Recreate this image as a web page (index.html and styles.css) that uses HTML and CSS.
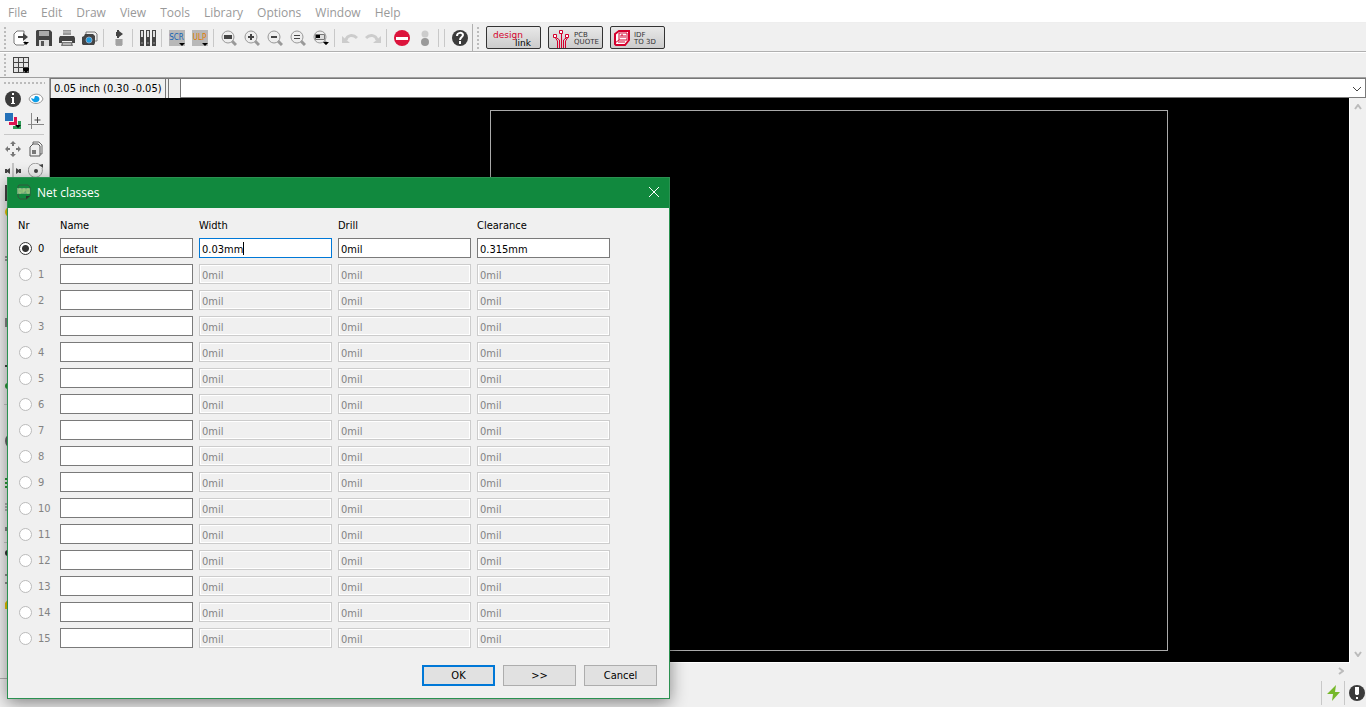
FILE: index.html
```html
<!DOCTYPE html>
<html lang="en">
    <head>
        <meta charset="utf-8">
        <title>Board - Net classes</title>
        <link rel="stylesheet" href="styles.css">
    </head>
    <body>
        <nav class="menubar">
            <a href="#">File</a>
            <a href="#">Edit</a>
            <a href="#">Draw</a>
            <a href="#">View</a>
            <a href="#">Tools</a>
            <a href="#">Library</a>
            <a href="#">Options</a>
            <a href="#">Window</a>
            <a href="#">Help</a>
        </nav>

        <div class="toolbar">
            <span class="grip"></span>
            <button class="tool" aria-label="Open"><svg viewBox="0 0 16 16"><path d="M11 4V1H4L1 4v9l2 2h8l1-1v-3" fill="#fff" stroke="#777"/><path d="M5 6h5V3l5 4-5 4V8H5z" fill="#444"/><path d="M10 12h6l-3 3z"/></svg></button>
            <button class="tool" aria-label="Save"><svg viewBox="0 0 16 16"><path d="M1 0h13l2 2v14H0V1z" fill="#444"/><path d="M3 1h10v5H3z" fill="#aaa"/><path d="M3 10h10v6H3z" fill="#ddd"/><path d="M5 11h3v5H5z" fill="#555"/></svg></button>
            <button class="tool" aria-label="Print"><svg viewBox="0 0 16 16"><path d="M4 0h8v5H4z" fill="#999"/><path d="M4 2h8" stroke="#ccc"/><path d="M1 6h14l1 2v5h-3v-2H3v2H0V8z" fill="#444"/><path d="M3 12h10l1 4H2z" fill="#777"/><path d="M4 14h8" stroke="#eee"/></svg></button>
            <button class="tool" aria-label="Image"><svg viewBox="0 0 16 16"><path d="M4 4V2h9l2 2v7h-2" fill="none" stroke="#777"/><path d="M3 4h8l2 2v7l-1 2H1l-1-1V7l2-1z" fill="#444"/><circle cx="7" cy="10" r="3" fill="#1e9de0" stroke="#8ac"/></svg></button>
            <span class="sep"></span>
            <button class="tool" aria-label="Schematic"><svg viewBox="0 0 16 16"><path d="M6 0h2v1l4 3-4 3v1H6V6H5V2h1z" fill="#444"/><path d="M5 9h6v7H5z" fill="#aaa"/><path d="M4 10h8M4 12h8M4 14h8" stroke="#999"/></svg></button>
            <span class="sep"></span>
            <button class="tool" aria-label="Use library"><svg viewBox="0 0 16 16"><path d="M0 0h4v16H0zM6 0h4v16H6zM12 0h4v16h-4z" fill="#444"/><path d="M1 1h2v6H1zM7 1h2v6H7zM13 1h2v6h-2z" fill="#ddd"/><path d="M1 13h2M7 13h2M13 13h2" stroke="#999"/></svg></button>
            <span class="sep"></span>
            <button class="tool"><span class="chip scr">SCR</span></button>
            <button class="tool"><span class="chip ulp">ULP</span></button>
            <span class="sep"></span>
            <button class="tool" aria-label="Fit"><svg viewBox="0 0 16 16"><path d="m10 10 5 5" stroke="#999" stroke-width="3"/><circle cx="7" cy="7" r="6" fill="#eee" stroke="#999"/><path d="M3 5h8v4H3z" fill="#444"/></svg></button>
            <button class="tool" aria-label="Zoom in"><svg viewBox="0 0 16 16"><path d="m10 10 5 5" stroke="#999" stroke-width="3"/><circle cx="7" cy="7" r="6" fill="#eee" stroke="#999"/><path d="M4 7h6M7 4v6" stroke="#444" stroke-width="2"/></svg></button>
            <button class="tool" aria-label="Zoom out"><svg viewBox="0 0 16 16"><path d="m10 10 5 5" stroke="#999" stroke-width="3"/><circle cx="7" cy="7" r="6" fill="#eee" stroke="#999"/><path d="M4 7h6" stroke="#444" stroke-width="2"/></svg></button>
            <button class="tool" aria-label="Redraw"><svg viewBox="0 0 16 16"><path d="m10 10 5 5" stroke="#999" stroke-width="3"/><circle cx="7" cy="7" r="6" fill="#eee" stroke="#999"/><path d="M4 5.500h6M4 8.500h6" stroke="#444"/></svg></button>
            <button class="tool" aria-label="Select zoom"><svg viewBox="0 0 16 16"><path d="m10 10 4 4" stroke="#999" stroke-width="3"/><circle cx="7" cy="7" r="6" fill="#eee" stroke="#999"/><path d="M2.500 4.500h9v5h-9z" fill="#ddd" stroke="#777"/><path d="M3 5h4v3H3zM10 12h6l-3 3z"/></svg></button>
            <span class="sep"></span>
            <button class="tool" aria-label="Undo"><svg viewBox="0 0 16 16"><path d="M4 10c1-5 7-6 11-2" fill="none" stroke="#ccc" stroke-width="3"/><path d="M0 6v7h8z" fill="#ccc"/></svg></button>
            <button class="tool" aria-label="Redo"><svg viewBox="0 0 16 16"><path d="M12 10C11 5 5 4 1 8" fill="none" stroke="#ccc" stroke-width="3"/><path d="M16 6v7H8z" fill="#ccc"/></svg></button>
            <span class="sep"></span>
            <button class="tool" aria-label="Cancel command"><svg viewBox="0 0 16 16"><circle cx="8" cy="8" r="8" fill="#dc143c"/><path d="M2 7h12v3H2z" fill="#fff"/></svg></button>
            <button class="tool" aria-label="Go"><svg viewBox="0 0 16 16"><circle cx="8" cy="4" r="3.500" fill="#ccc"/><circle cx="8" cy="12" r="4" fill="#999"/></svg></button>
            <span class="sep"></span>
            <span class="sep"></span>
            <button class="tool" aria-label="Help topics"><svg viewBox="0 0 16 16"><circle cx="8" cy="8" r="8" fill="#3c3c3c"/><path d="M5 6c0-4 6-4 6-1 0 2-3 2-3 5M8 11v3" fill="none" stroke="#fff" stroke-width="2"/></svg></button>
            <span class="edge"></span>
            <span class="grip"></span>
            <div class="brands">
                <button class="brand design"><span>design</span><b>link</b></button>
                <button class="brand">
                    <svg viewBox="0 0 18 20"><path d="M9.500 4v16M7.500 20V12l-4-3M11.500 20V12l4-3M5.500 20v-7l-2-3M13.500 20v-7l2-3" fill="none" stroke="#d4002d"/><path d="M7.500 2.500h3v3h-3zM1.500 6.500h3v3h-3zM13.500 6.500h3v3h-3z" fill="#fff" stroke="#d4002d"/></svg>
                    <span>PCB<br>QUOTE</span>
                </button>
                <button class="brand idf">
                    <svg viewBox="0 0 16 16"><path d="M1 4l4-3h10v9l-4 5H2l-1-1z" fill="#fff" stroke="#d4002d" stroke-width="2"/><path d="M5 3h8v7H5zM1 13l4-3M7 8V5h2v3M11 5v3M4 12h7" fill="none" stroke="#d4002d"/></svg>
                    <span>IDF<br>TO 3D</span>
                </button>
            </div>
        </div>

        <div class="toolbar second">
            <span class="grip"></span>
            <button class="tool" aria-label="Grid"><svg viewBox="0 0 16 16"><path d="M0 0h16v16H0z" fill="#444"/><path d="M1 1h4v4H1zM6 1h4v4H6zM11 1h4v4h-4zM1 6h4v4H1zM6 6h4v4H6zM11 6h4v4h-4zM1 11h4v4H1zM6 11h4v4H6zM11 11h4v4h-4z" fill="#e4e4e4"/><path d="M10 11h6v2l-3 3-3-3z"/></svg></button>
        </div>

        <main class="workspace">
            <aside class="palette">
                <span class="grip-h"></span>
                <div class="tools">
                    <button class="tool" aria-label="Info"><svg viewBox="0 0 16 16"><circle cx="8" cy="8" r="8" fill="#3c3c3c"/><path d="M7 2h2v2H7zM6 6h3v6h1v1H6v-1h1V7H6z" fill="#fff"/></svg></button>
                    <button class="tool" aria-label="Show"><svg viewBox="0 0 16 16"><path d="M1 8c2-6 12-7 14 0-2 6-12 6-14 0z" fill="#fff" stroke="#999"/><path d="M3 7l3 1 1-3c5-1 6 5 2 6-3 1-5-1-6-4z" fill="#0d9ee8"/></svg></button>
                    <button class="tool" aria-label="Layers"><svg viewBox="0 0 16 16"><path d="M0 0h8v8H0z" fill="#2471b9"/><path d="M9 4h3v8H4V9h5z" fill="#dc1450"/><path d="M13 8h3v8H8v-3h5z" fill="#2e9b57"/><path d="M10 12h6l-3 3z"/></svg></button>
                    <button class="tool" aria-label="Mark"><svg viewBox="0 0 16 16"><path d="M3.500 0v16M0 11.500h16" stroke="#888"/><path d="M9.500 4v6M6.500 7h6" stroke="#444"/></svg></button>
                    <span class="line"></span>
                    <button class="tool" aria-label="Move"><svg viewBox="0 0 16 16"><path d="M8 0l3 3H9v2H7V3H5zM8 16l3-3H9v-2H7v2H5zM0 8l3-3v2h2v2H3v2zM16 8l-3-3v2h-2v2h2v2z" fill="#777"/></svg></button>
                    <button class="tool" aria-label="Copy"><svg viewBox="0 0 16 16"><path d="M5 3V1h6l3 3v9h-2" fill="none" stroke="#666"/><path d="M5 3h5l2 2v10H2V6z" fill="#eee" stroke="#555"/><path d="M4 9h4v4H4z" fill="#777"/></svg></button>
                    <button class="tool" aria-label="Mirror"><svg viewBox="0 0 16 16"><path d="M8 0v16" stroke="#999"/><path d="M0 6h2v1l3-2v6L2 9v1H0zM16 6h-2v1l-3-2v6l3-2v1h2z" fill="#444"/></svg></button>
                    <button class="tool" aria-label="Rotate"><svg viewBox="0 0 16 16"><path d="M12 2a7 7 0 1 0 2 3" fill="none" stroke="#999"/><circle cx="8" cy="8" r="2" fill="#444"/><path d="M11 2l4-1v4z" fill="#444"/></svg></button>
                </div>
                <div class="tools narrow">
                    <button class="tool" aria-label="Group"><svg viewBox="0 0 16 16"><path d="M1 1h14v14H1z" fill="none" stroke="#444" stroke-width="2"/></svg></button>
                    <button class="tool" aria-label="Change"><svg viewBox="0 0 16 16"><circle cx="5" cy="5" r="5" fill="#e8c800"/></svg></button>
                    <button class="tool" aria-label="Delete"></button>
                    <button class="tool" aria-label="Pinswap"><svg viewBox="0 0 16 16"><path d="M0 6h16M0 9h16" stroke="#444"/></svg></button>
                    <button class="tool" aria-label="Lock"></button>
                    <button class="tool" aria-label="Name"></button>
                    <button class="tool" aria-label="Value"><svg viewBox="0 0 16 16"><path d="M0 1h14v9H0z" fill="#888"/></svg></button>
                    <button class="tool" aria-label="Smash"></button>
                    <button class="tool" aria-label="Miter"><svg viewBox="0 0 16 16"><path d="M0 5h3v8" fill="none" stroke="#444" stroke-width="2"/></svg></button>
                    <button class="tool" aria-label="Split"><svg viewBox="0 0 16 16"><circle cx="3" cy="3" r="3" fill="#2e9b3a"/></svg></button>
                    <span class="line"></span>
                    <button class="tool" aria-label="Route"></button>
                    <button class="tool" aria-label="Ripup"><svg viewBox="0 0 16 16"><circle cx="8" cy="8" r="7" fill="none" stroke="#666" stroke-width="2"/></svg></button>
                    <button class="tool" aria-label="Wire"></button>
                    <button class="tool" aria-label="Via"><svg viewBox="0 0 16 16"><path d="M0 2h6M0 6h6M0 10h6" stroke="#2e9b3a" stroke-width="2"/></svg></button>
                    <button class="tool" aria-label="Signal"><svg viewBox="0 0 16 16"><path d="M0 5h6M0 8h6M0 11h6" stroke="#777"/></svg></button>
                    <button class="tool" aria-label="Hole"><svg viewBox="0 0 16 16"><path d="M0 6h10v4H0z" fill="#888"/></svg></button>
                    <span class="line"></span>
                    <button class="tool" aria-label="Ratsnest"><svg viewBox="0 0 16 16"><circle cx="3" cy="4" r="3" fill="#333"/></svg></button>
                    <button class="tool" aria-label="Autorouter"><svg viewBox="0 0 16 16"><path d="M0 4h4v8H0" fill="none" stroke="#333"/></svg></button>
                    <button class="tool" aria-label="Errors"><svg viewBox="0 0 16 16"><path d="M8 0l8 16H0V10z" fill="#e8c800"/></svg></button>
                </div>
            </aside>

            <section class="editor">
                <div class="command">
                    <output class="coords">0.05 inch (0.30 -0.05)</output>
                    <span class="spacer"></span>
                    <div class="combo">
                        <select aria-label="Command line"><option></option></select>
                        <svg viewBox="0 0 10 6"><path d="m1 1 4 4 4-4" fill="none" stroke="#444"/></svg>
                    </div>
                </div>
                <div class="view">
                    <div class="canvas"><div class="board"></div></div>
                    <div class="vscroll">
                        <svg viewBox="0 0 8 6"><path d="m1 5 3-4 3 4" fill="none" stroke="#bbb" stroke-width="2"/></svg>
                        <svg viewBox="0 0 8 6"><path d="m1 1 3 4 3-4" fill="none" stroke="#bbb" stroke-width="2"/></svg>
                    </div>
                </div>
                <div class="hscroll">
                    <svg viewBox="0 0 6 8"><path d="m1 1 4 3-4 3" fill="none" stroke="#bbb" stroke-width="2"/></svg>
                </div>
            </section>
        </main>

        <footer class="status">
            <span class="bolt"><svg viewBox="0 0 14 16"><path d="M9 0 0 9h6l-1 7 8-9H8z" fill="#76b82a"/></svg></span>
            <svg class="alert" viewBox="0 0 16 16"><circle cx="8" cy="8" r="8" fill="#3c3c3c"/><path d="M6 2h4v7L9 10H7L6 9zM7 12h2v2H7z" fill="#fff"/></svg>
        </footer>

        <form class="dialog" role="dialog" aria-labelledby="dialogTitle">
            <header class="titlebar">
                <svg class="brd" viewBox="0 0 14 16"><path d="M2 1h9l2 2v9l-3 3H3l-2-2V2z" fill="none" stroke="#34573c"/><path d="M0 4h13v6H0z" fill="#6da878"/><path d="M2 5v4h2V5zM6 9V5h2v2H6M10 5v4h2V5z" fill="none" stroke="#a5d07f"/><path d="M9 12h4l-4 3z" fill="#26372a"/></svg>
                <span id="dialogTitle">Net classes</span>
                <button type="button" class="close" aria-label="Close"><svg viewBox="0 0 12 12"><path d="m1 1 10 10M11 1 1 11" stroke="#fff"/></svg></button>
            </header>
            <table>
                <thead>
                    <tr>
                        <th class="nr">Nr</th>
                        <th>Name</th>
                        <th>Width</th>
                        <th>Drill</th>
                        <th>Clearance</th>
                    </tr>
                </thead>
                <tbody id="classes">
                    <tr>
                        <td><label><input type="radio" name="nr" checked>0</label></td>
                        <td><input type="text" aria-label="Name 0" value="default"></td>
                        <td><div class="active"><input type="text" id="width0" aria-label="Width 0" value="0.03mm" size="5"><i class="caret"></i></div></td>
                        <td><input type="text" aria-label="Drill 0" value="0mil"></td>
                        <td><input type="text" aria-label="Clearance 0" value="0.315mm"></td>
                    </tr>
                </tbody>
            </table>
            <div class="actions">
                <button type="button" class="ok">OK</button>
                <button type="button">&gt;&gt;</button>
                <button type="button">Cancel</button>
            </div>
        </form>
        <script src="script.js"></script>
    </body>
</html>
```
FILE: styles.css
```css
* {
    box-sizing: border-box;
}
body {
    margin: 0;
    height: 100vh;
    overflow: hidden;
    display: flex;
    flex-direction: column;
    background: #f0f0f0;
    color: #000;
    font-family: "DejaVu Sans Condensed", "DejaVu Sans", sans-serif;
    font-size: 11px;
}
button, input, select {
    font: inherit;
    color: inherit;
}
svg {
    display: block;
}
.menubar {
    display: flex;
    gap: 14px;
    height: 23px;
    padding: 4px 8px 0;
    background: #fff;
    border-bottom: 1px solid #eee;
    font: 12px/18px "Open Sans", "Noto Sans", sans-serif;
}
.menubar a {
    color: #999;
    text-decoration: none;
}
.toolbar {
    display: flex;
    align-items: center;
    height: 30px;
    border-bottom: 1px solid #fff;
    box-shadow: inset 0 -1px #b0b0b0;
}
.second {
    height: 25px;
    border-bottom: 1px solid #a0a0a0;
    box-shadow: none;
}
.tool {
    display: flex;
    justify-content: center;
    align-items: center;
    width: 23px;
    height: 22px;
    padding: 0;
    border: 0;
    background: none;
}
.tool svg {
    width: 16px;
    height: 16px;
}
.grip {
    width: 2px;
    height: 22px;
    margin: 0 3px 0 4px;
    background: repeating-linear-gradient(#bbb 0 2px, transparent 2px 4px);
}
.sep {
    width: 1px;
    height: 18px;
    margin: 0 3px 0 2px;
    background: #c8c8c8;
}
.edge {
    width: 1px;
    height: 28px;
    margin-left: 1px;
    background: #b0b0b0;
}
.chip {
    position: relative;
    width: 16px;
    height: 16px;
    background: #b8b8b8;
    font-size: 8px;
    line-height: 15px;
}
.chip::after {
    content: "";
    position: absolute;
    right: 0;
    bottom: 0;
    border: 3px solid transparent;
    border-top-color: #000;
    border-bottom: 0;
}
.scr {
    color: #1463b4;
}
.ulp {
    color: #e07b00;
}
.brands {
    display: flex;
    gap: 7px;
    margin-left: 4px;
}
.brand {
    display: flex;
    align-items: center;
    gap: 4px;
    width: 55px;
    height: 23px;
    padding: 0 0 0 3px;
    border: 1px solid #333;
    border-radius: 2px;
    background: linear-gradient(#e8e8e8, #ccc);
    color: #333;
    font: 7px/7px "DejaVu Sans", sans-serif;
    text-align: left;
    white-space: nowrap;
}
.brand span {
    padding-top: 3px;
}
.brand svg {
    width: 18px;
    height: 20px;
}
.idf svg {
    width: 16px;
    height: 16px;
}
.design {
    flex-direction: column;
    align-items: stretch;
    justify-content: center;
    gap: 0;
    padding: 0 9px 0 6px;
    font-size: 9px;
    line-height: 8px;
    color: #d4002d;
}
.design b {
    color: #000;
    font-weight: normal;
    text-align: right;
}
.workspace {
    flex: 1;
    display: flex;
    min-height: 0;
}
.palette {
    width: 50px;
    padding: 4px 1px 0;
    overflow: hidden;
    border-right: 1px solid #a0a0a0;
    border-bottom: 1px solid #b0b0b0;
}
.grip-h {
    display: block;
    height: 2px;
    margin: 0 3px 4px;
    background: repeating-linear-gradient(90deg, #bbb 0 2px, transparent 2px 4px);
}
.tools {
    display: grid;
    grid-template-columns: 23px 23px;
}
.narrow {
    grid-template-columns: 23px;
}
.line {
    grid-column: 1 / -1;
    height: 1px;
    margin: 2px 3px 3px;
    background: #c8c8c8;
}
.editor {
    flex: 1;
    min-width: 0;
    display: flex;
    flex-direction: column;
}
.command {
    display: flex;
    height: 20px;
    background: #f0f0f0;
    border-top: 1px solid #777;
}
.coords {
    padding: 0 3px;
    border: 1px solid #777;
    border-width: 0 1px 0 1px;
    line-height: 20px;
    white-space: nowrap;
}
.spacer {
    width: 13px;
    margin-left: 2px;
    border: 1px solid #777;
    border-top: 0;
    border-bottom: 0;
}
.combo {
    flex: 1;
    position: relative;
}
.combo select {
    display: block;
    appearance: none;
    width: 100%;
    height: 19px;
    border: 1px solid #7a7a7a;
    border-top: 0;
    border-left: 0;
    border-radius: 0;
    background: #fff;
}
.combo svg {
    position: absolute;
    right: 4px;
    top: 7px;
    width: 10px;
    height: 6px;
}
.view {
    flex: 1;
    display: flex;
}
.canvas {
    flex: 1;
    display: flex;
    padding: 12px 181px 11px 440px;
    background: #000;
    border-bottom: 1px solid #fff;
}
.board {
    flex: 1;
    border: 1px solid #aaa;
}
.vscroll {
    display: flex;
    flex-direction: column;
    justify-content: space-between;
    align-items: center;
    width: 17px;
    padding: 6px 0;
    border-left: 1px solid #fff;
}
.vscroll svg {
    width: 8px;
    height: 6px;
}
.hscroll {
    display: flex;
    justify-content: flex-end;
    align-items: center;
    height: 16px;
    padding-right: 22px;
}
.hscroll svg {
    width: 6px;
    height: 8px;
}
.status {
    display: flex;
    justify-content: flex-end;
    align-items: center;
    gap: 4px;
    height: 28px;
    padding-right: 1px;
}
.bolt {
    display: flex;
    align-items: center;
    height: 24px;
    padding: 0 3px 0 5px;
    border: 1px solid #c8c8c8;
    border-width: 0 1px;
}
.bolt svg {
    width: 14px;
    height: 16px;
}
.alert {
    width: 16px;
    height: 16px;
}

/* dialog */
.dialog {
    position: absolute;
    left: 7px;
    top: 177px;
    width: 663px;
    background: #f0f0f0;
    border: 1px solid #2b9151;
    box-shadow: 0 4px 16px rgba(0, 0, 0, 0.45);
}
.titlebar {
    display: flex;
    align-items: center;
    gap: 6px;
    height: 30px;
    padding: 0 9px 2px;
    background: #11893e;
    color: #fff;
    font: 12px "Open Sans", "Noto Sans", sans-serif;
}
.brd {
    width: 14px;
    height: 16px;
}
.close {
    margin-left: auto;
    padding: 0;
    border: 0;
    background: none;
}
.close svg {
    width: 12px;
    height: 12px;
}
.dialog table {
    margin: 4px;
    border-spacing: 6px;
}
.dialog th {
    width: 133px;
    height: 14px;
    padding: 2px 0 0;
    font-weight: normal;
    line-height: 12px;
    text-align: left;
}
.dialog .nr {
    width: 36px;
}
.dialog td {
    padding: 0;
    height: 20px;
}
.dialog label {
    display: flex;
    align-items: center;
    gap: 6px;
    height: 19px;
}
.dialog [type="radio"] {
    appearance: none;
    width: 13px;
    height: 13px;
    margin: 0 0 0 1px;
    border: 1px solid #333;
    border-radius: 50%;
    background: #fff;
}
.dialog [type="radio"]:checked {
    background: radial-gradient(#333 0 3px, #fff 4px);
}
.dialog [type="radio"]:disabled {
    border-color: #bbb;
}
.dialog [type="text"] {
    display: block;
    width: 100%;
    height: 20px;
    padding: 2px 2px 0;
    border: 1px solid #7a7a7a;
    border-radius: 0;
    background: #fff;
    outline: none;
}
.dialog [type="text"]:disabled {
    background: #f0f0f0;
    border-color: #ccc;
    box-shadow: inset 0 0 0 1px #fff;
}
.off label, .off :disabled {
    color: #838383;
}
.dialog .active {
    display: flex;
    align-items: center;
    height: 20px;
    border: 1px solid #0078d7;
    background: #fff;
}
.dialog .active [type="text"] {
    width: auto;
    height: 18px;
    padding: 2px 0 0 2px;
    border: 0;
    field-sizing: content;
}
.caret {
    width: 1px;
    height: 13px;
    background: #000;
}
.actions {
    display: flex;
    justify-content: flex-end;
    gap: 8px;
    padding: 7px 12px 12px;
}
.actions button {
    width: 73px;
    height: 21px;
    padding: 0;
    border: 1px solid #adadad;
    background: #e1e1e1;
}
.actions .ok {
    border: 2px solid #0078d7;
}
```
FILE: script.js
```js
var classes = document.getElementById("classes");

// unused net classes, only their name can be typed in
for (var i = 1; i < 16; i++) {
    var row = "<tr class='off'>";
    row += "<td><label><input type='radio' name='nr' disabled>" + i + "</label></td>";
    row += "<td><input type='text' aria-label='Name " + i + "'></td>";
    row += "<td><input type='text' aria-label='Width " + i + "' value='0mil' disabled></td>";
    row += "<td><input type='text' aria-label='Drill " + i + "' value='0mil' disabled></td>";
    row += "<td><input type='text' aria-label='Clearance " + i + "' value='0mil' disabled></td>";
    row += "</tr>";
    classes.insertAdjacentHTML("beforeend", row);
}
```
